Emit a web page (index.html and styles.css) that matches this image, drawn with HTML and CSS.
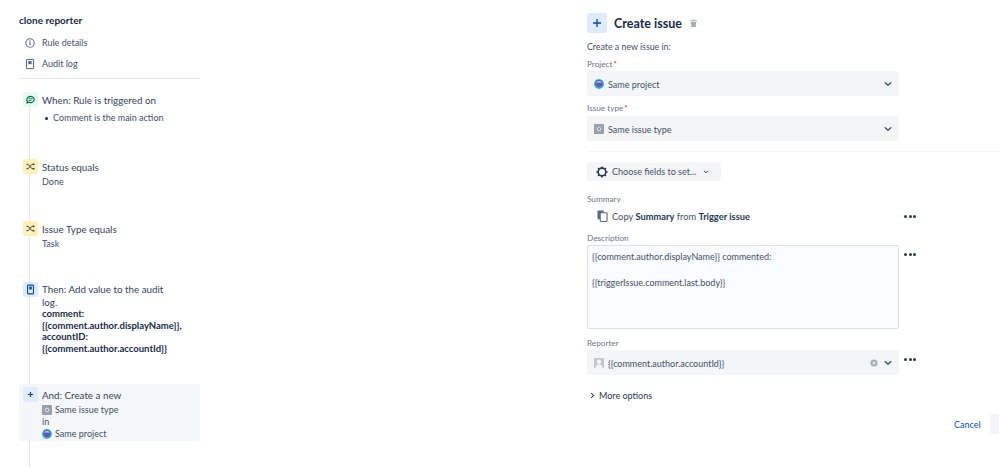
FILE: index.html
```html
<!DOCTYPE html>
<html lang="en">
<head>
  <meta charset="UTF-8" />
  <title>clone reporter</title>
  <link rel="stylesheet" href="styles.css">
</head>
<body>
  <div class="page">
    <div class="sidebar">
      <h2 class="rule-name">clone reporter</h2>
      <div class="nav-item">
        <svg class="nav-icon" viewBox="0 0 12 12"><circle cx="6" cy="6" r="4.2" fill="none" stroke="#5e6c84" stroke-width="1.1"/><rect x="5.4" y="5.2" width="1.2" height="3" fill="#5e6c84"/><rect x="5.4" y="3.4" width="1.2" height="1.2" fill="#5e6c84"/></svg>
        Rule details
      </div>
      <div class="nav-item">
        <svg class="nav-icon" viewBox="0 0 12 12"><rect x="2.5" y="1.5" width="7" height="9" rx="0.8" fill="none" stroke="#5e6c84" stroke-width="1.1"/><rect x="4.2" y="3" width="3.4" height="3.2" fill="#5e6c84"/></svg>
        Audit log
      </div>
      <div class="sidebar-rule"></div>

      <div class="steps">
        <div class="step step-when">
          <span class="tile tile-green">
            <svg viewBox="0 0 12 12"><path d="M2 6a4 3.4 0 1 1 2 3l-1.6.8.3-1.7A3.4 3.4 0 0 1 2 6z" fill="none" stroke="#006644" stroke-width="1.3"/><path d="M4 5.2h4.2M4 7h3" stroke="#006644" stroke-width="0.9"/></svg>
          </span>
          <div class="step-body">
            <div class="step-title">When: Rule is triggered on</div>
            <ul class="step-list"><li>Comment is the main action</li></ul>
          </div>
        </div>

        <div class="step step-status">
          <span class="tile tile-yellow">
            <svg viewBox="0 0 12 12"><path d="M1.5 3.6h2l4 4.8h2M1.5 8.4h2l4-4.8h2" fill="none" stroke="#253858" stroke-width="1"/><path d="M9 2.2l1.8 1.4L9 5zM9 7l1.8 1.4L9 9.8z" fill="#253858"/></svg>
          </span>
          <div class="step-body">
            <div class="step-title">Status equals</div>
            <div class="step-text">Done</div>
          </div>
        </div>

        <div class="step step-type">
          <span class="tile tile-yellow">
            <svg viewBox="0 0 12 12"><path d="M1.5 3.6h2l4 4.8h2M1.5 8.4h2l4-4.8h2" fill="none" stroke="#253858" stroke-width="1"/><path d="M9 2.2l1.8 1.4L9 5zM9 7l1.8 1.4L9 9.8z" fill="#253858"/></svg>
          </span>
          <div class="step-body">
            <div class="step-title">Issue Type equals</div>
            <div class="step-text">Task</div>
          </div>
        </div>

        <div class="step step-then">
          <span class="tile tile-blue">
            <svg viewBox="0 0 12 12"><rect x="2.8" y="1.2" width="6.4" height="9.6" rx="0.8" fill="none" stroke="#0747a6" stroke-width="1.2"/><rect x="4.6" y="2.8" width="2.8" height="3.2" fill="#0747a6"/></svg>
          </span>
          <div class="step-body">
            <div class="step-title">Then: Add value to the audit log.</div>
            <div class="step-strong">comment: {{comment.author.displayName}}, accountID: {{comment.author.accountId}}</div>
          </div>
        </div>

        <div class="step step-and">
          <span class="tile tile-blue">
            <svg viewBox="0 0 12 12"><path d="M6 3.2v5.6M3.2 6h5.6" stroke="#0747a6" stroke-width="1.3"/></svg>
          </span>
          <div class="step-body">
            <div class="step-title">And: Create a new</div>
            <div class="step-text step-line">
              <svg class="issue-icon" viewBox="0 0 10 10"><rect width="10" height="10" rx="1" fill="#97a0af"/><circle cx="5" cy="5" r="1.8" fill="none" stroke="#dfe1e6" stroke-width="1"/></svg>
              Same issue type
            </div>
            <div class="step-text">in</div>
            <div class="step-text step-line">
              <svg class="issue-icon" viewBox="0 0 10 10"><circle cx="5" cy="5" r="5" fill="#2ebfc4"/><circle cx="5" cy="4.6" r="3.6" fill="#6554c0"/><path d="M2 3.6a3.2 2.6 0 0 1 6 0z" fill="#d6cdf2"/></svg>
              Same project
            </div>
          </div>
        </div>
      </div>
    </div>

    <div class="panel">
      <div class="panel-inner">
        <div class="panel-head">
          <span class="tile-big">
            <svg viewBox="0 0 12 12"><path d="M6 2v8M2 6h8" stroke="#0747a6" stroke-width="1.3"/></svg>
          </span>
          <h1>Create issue</h1>
          <svg class="trash" viewBox="0 0 10 10"><rect x="1.2" y="1.4" width="7.6" height="1.2" fill="#a5adba"/><rect x="3.8" y="0.6" width="2.4" height="1" fill="#a5adba"/><path d="M2 3.2h6l-.6 5.8H2.6z" fill="#a5adba"/></svg>
        </div>
        <p class="panel-desc">Create a new issue in:</p>

        <div class="field-label field-project">Project<span class="req">*</span></div>
        <div class="select">
          <svg class="issue-icon" viewBox="0 0 10 10"><circle cx="5" cy="5" r="5" fill="#2ebfc4"/><circle cx="5" cy="4.6" r="3.6" fill="#6554c0"/><path d="M2 3.6a3.2 2.6 0 0 1 6 0z" fill="#d6cdf2"/></svg>
          <span class="select-text">Same project</span>
          <svg class="chevron" viewBox="0 0 10 6"><path d="M1 1l4 3.6L9 1" fill="none" stroke="#253858" stroke-width="1.5"/></svg>
        </div>

        <div class="field-label field-type">Issue type<span class="req">*</span></div>
        <div class="select">
          <svg class="issue-icon" viewBox="0 0 10 10"><rect width="10" height="10" rx="1" fill="#97a0af"/><circle cx="5" cy="5" r="1.8" fill="none" stroke="#dfe1e6" stroke-width="1"/></svg>
          <span class="select-text">Same issue type</span>
          <svg class="chevron" viewBox="0 0 10 6"><path d="M1 1l4 3.6L9 1" fill="none" stroke="#253858" stroke-width="1.5"/></svg>
        </div>
      </div>

      <div class="panel-rule"></div>

      <div class="panel-inner">
        <div class="choose-btn">
          <svg class="gear" viewBox="0 0 14 14"><circle cx="7" cy="7" r="4.5" fill="none" stroke="#253858" stroke-width="1.9"/><path d="M7 .5v2M7 11.5v2M.5 7h2M11.5 7h2M2.4 2.4l1.4 1.4M10.2 10.2l1.4 1.4M2.4 11.6l1.4-1.4M10.2 3.8l1.4-1.4" stroke="#253858" stroke-width="1.8"/></svg>
          <span>Choose fields to set...</span>
          <svg class="chevron-small" viewBox="0 0 10 6"><path d="M1.5 1l3.5 3.2L8.5 1" fill="none" stroke="#253858" stroke-width="1.5"/></svg>
        </div>

        <div class="field-label field-summary">Summary</div>
        <div class="field-row summary-row">
          <div class="summary-value">
            <svg class="copy-icon" viewBox="0 0 12 13"><rect x="0.5" y="0.5" width="7" height="9.5" rx="1" fill="#5e6c84"/><rect x="3.5" y="3" width="7.5" height="9.5" rx="1" fill="#fff" stroke="#5e6c84" stroke-width="1.2"/></svg>
            <span>Copy <b>Summary</b> from <b>Trigger issue</b></span>
          </div>
          <div class="dots"><i></i><i></i><i></i></div>
        </div>

        <div class="field-label field-description">Description</div>
        <div class="field-row">
          <div class="textarea">
            <p>{{comment.author.displayName}} commented:</p>
            <p>{{triggerIssue.comment.last.body}}</p>
          </div>
          <div class="dots dots-top"><i></i><i></i><i></i></div>
        </div>

        <div class="field-label field-reporter">Reporter</div>
        <div class="field-row">
          <div class="select select-reporter">
            <svg class="issue-icon" viewBox="0 0 10 10"><rect width="10" height="10" rx="1" fill="#c1c7d0"/><circle cx="5" cy="3.8" r="2.2" fill="#f4f5f7"/><path d="M1.5 10a3.5 3.6 0 0 1 7 0z" fill="#f4f5f7"/></svg>
            <span class="select-text">{{comment.author.accountId}}</span>
            <svg class="clear" viewBox="0 0 10 10"><circle cx="5" cy="5" r="4.5" fill="#a5adba"/><path d="M3.3 3.3l3.4 3.4M6.7 3.3l-3.4 3.4" stroke="#f4f5f7" stroke-width="1.2"/></svg>
            <svg class="chevron" viewBox="0 0 10 6"><path d="M1 1l4 3.6L9 1" fill="none" stroke="#253858" stroke-width="1.5"/></svg>
          </div>
          <div class="dots dots-top"><i></i><i></i><i></i></div>
        </div>

        <div class="more">
          <svg class="more-arrow" viewBox="0 0 6 10"><path d="M1.2 1.5L4.5 5 1.2 8.5" fill="none" stroke="#253858" stroke-width="1.5"/></svg>
          More options
        </div>

        <div class="actions">
          <span class="cancel">Cancel</span>
          <span class="save"></span>
        </div>
      </div>
    </div>
  </div>
</body>
</html>
```

FILE: styles.css
```css
* {
  margin: 0;
  padding: 0;
  box-sizing: border-box;
}
html, body {
  height: 100%;
  overflow: hidden;
  background: #ffffff;
  font-family: Lato, sans-serif;
  color: #42526e;
}
.page {
  display: flex;
  height: 467px;
  overflow: hidden;
}
.sidebar {
  width: 181px;
  margin-left: 19px;
  flex: none;
  padding-top: 13px;
}
.rule-name {
  font-size: 10px;
  line-height: 14px;
  font-weight: 700;
  color: #172b4d;
  margin-bottom: 5px;
}
.nav-item {
  display: flex;
  align-items: center;
  height: 21px;
  padding-left: 5px;
  gap: 6px;
  font-size: 9px;
  color: #42526e;
}
.nav-icon {
  width: 12px;
  height: 12px;
}
.sidebar-rule {
  height: 1px;
  background: #e6e8ec;
  margin-top: 4px;
}
.steps {
  position: relative;
  margin-top: 13px;
}
.steps::before {
  content: "";
  position: absolute;
  left: 10px;
  top: 0;
  bottom: -100px;
  width: 1px;
  background: #e4e6ea;
}
.step {
  position: relative;
  display: flex;
  gap: 4px;
  padding-left: 4px;
}
.step-status { margin-top: 35px; }
.step-type { margin-top: 33px; }
.step-then { margin-top: 32px; }
.step-and {
  margin-top: 30px;
  padding-top: 3px;
  height: 57px;
  background: rgba(244, 245, 247, 0.9);
  border-radius: 2px;
}
.tile {
  flex: none;
  width: 15px;
  height: 15px;
  border-radius: 2px;
  display: flex;
  align-items: center;
  justify-content: center;
}
.tile svg {
  width: 11px;
  height: 11px;
}
.tile-green { background: #e3fcef; }
.tile-yellow { background: #fff0b3; }
.tile-blue { background: #deebff; }
.step-body {
  flex: 1;
  min-width: 0;
  padding-right: 28px;
}
.step-title {
  font-size: 9.8px;
  line-height: 13px;
  color: #344563;
  margin-top: 2px;
}
.step-then .step-title { margin-top: 1px; }
.step-text {
  font-size: 9px;
  line-height: 12px;
  color: #42526e;
  margin-top: 2px;
}
.step-and .step-text { margin-top: 0; }
.step-and .step-title { margin-bottom: 2px; }
.step-list {
  list-style: none;
  font-size: 9px;
  line-height: 12px;
  margin-top: 5px;
  padding-left: 11px;
}
.step-list li {
  position: relative;
}
.step-list li::before {
  content: "";
  position: absolute;
  left: -8px;
  top: 5px;
  width: 3px;
  height: 3px;
  border-radius: 50%;
  background: #172b4d;
}
.step-strong {
  font-size: 9.5px;
  line-height: 11.6px;
  font-weight: 700;
  color: #172b4d;
  margin-top: -1px;
}
.step-line {
  display: flex;
  align-items: center;
  gap: 3px;
}
.issue-icon {
  width: 10px;
  height: 10px;
  flex: none;
}
.panel {
  flex: none;
  width: 412px;
  margin-left: 387px;
}
.panel-inner {
  width: 312px;
}
.panel-head {
  display: flex;
  align-items: center;
  height: 20px;
  margin-top: 13px;
}
.tile-big {
  width: 20px;
  height: 20px;
  background: #deebff;
  border-radius: 2px;
  display: flex;
  align-items: center;
  justify-content: center;
}
.tile-big svg {
  width: 12px;
  height: 12px;
}
.panel-head h1 {
  font-size: 12.5px;
  font-weight: 700;
  color: #172b4d;
  margin-left: 7px;
}
.trash {
  width: 9px;
  height: 9px;
  margin-left: 7px;
}
.panel-desc {
  font-size: 8.8px;
  line-height: 13px;
  margin-top: 7px;
}
.field-label {
  font-size: 8.2px;
  line-height: 11px;
  color: #6b778c;
}
.req {
  color: #de350b;
  margin-left: 1px;
}
.field-project { margin-top: 6px; margin-bottom: 1px; }
.field-type { margin-top: 7px; margin-bottom: 2px; }
.field-summary { margin-top: 13px; }
.field-description { margin-top: 7px; margin-bottom: 1px; }
.field-reporter { margin-top: 9px; margin-bottom: 1px; }
.select {
  display: flex;
  align-items: center;
  width: 312px;
  height: 25px;
  padding: 0 7px;
  background: #f4f5f7;
  border-radius: 2px;
  font-size: 9px;
  flex: none;
}
.select .issue-icon {
  margin-right: 4px;
}
.select-text {
  flex: 1;
  padding-top: 1px;
}
.chevron {
  width: 8px;
  height: 6px;
}
.clear {
  width: 8px;
  height: 8px;
  margin-right: 6px;
}
.panel-rule {
  height: 1px;
  background: #f4f5f7;
  margin-top: 10px;
}
.choose-btn {
  display: inline-flex;
  align-items: center;
  width: 134px;
  height: 19px;
  margin-top: 10px;
  padding-left: 9px;
  background: #f4f5f7;
  border-radius: 2px;
  font-size: 9px;
}
.gear {
  width: 12px;
  height: 12px;
  margin-right: 4px;
}
.chevron-small {
  width: 6px;
  height: 4px;
  margin-left: 7px;
}
.field-row {
  display: flex;
  width: 330px;
}
.summary-row {
  align-items: center;
  height: 20px;
  margin-top: 1px;
}
.summary-value {
  display: flex;
  align-items: center;
  width: 312px;
  padding-left: 10px;
  font-size: 9.3px;
  gap: 4px;
}
.summary-value b {
  color: #253858;
  font-weight: 700;
}
.copy-icon {
  width: 11px;
  height: 12px;
}
.dots {
  flex: none;
  display: flex;
  gap: 1.5px;
  margin-left: 5px;
  align-self: center;
}
.dots i {
  width: 3px;
  height: 3px;
  border-radius: 50%;
  background: #253858;
}
.dots-top {
  align-self: flex-start;
  margin-top: 8px;
}
.textarea {
  width: 312px;
  height: 84px;
  flex: none;
  border: 1px solid #dfe1e6;
  border-radius: 2px;
  background: #fafbfc;
  padding: 4px;
  font-size: 9px;
  line-height: 13px;
}
.textarea p {
  margin-bottom: 13px;
}
.more {
  display: flex;
  align-items: center;
  font-size: 9px;
  color: #253858;
  margin-top: 14px;
  height: 13px;
  gap: 4px;
  padding-left: 3px;
}
.more-arrow {
  width: 5px;
  height: 7px;
}
.actions {
  display: flex;
  align-items: center;
  width: 412px;
  margin-top: 12px;
  padding-left: 367px;
  gap: 9px;
  height: 20px;
}
.cancel {
  font-size: 9px;
  color: #0052cc;
}
.save {
  flex: none;
  width: 20px;
  height: 20px;
  background: #f4f5f7;
  border-radius: 2px;
}
```
